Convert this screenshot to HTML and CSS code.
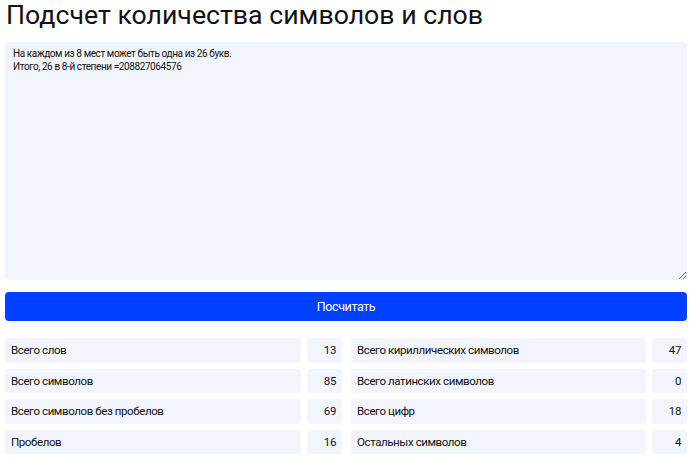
FILE: index.html
```html
<!DOCTYPE html>
<html lang="ru">
<head>
<meta charset="utf-8">
<title>Подсчет количества символов и слов</title>
<link rel="stylesheet" href="styles.css">
</head>
<body>
<div class="page">
  <h1 class="title">Подсчет количества символов и слов</h1>
  <textarea class="input">На каждом из 8 мест может быть одна из 26 букв.
Итого, 26 в 8-й степени =208827064576</textarea>
  <button class="btn">Посчитать</button>
  <div class="stats">
    <div class="col">
      <div class="row"><div class="label">Всего слов</div><div class="value">13</div></div>
      <div class="row"><div class="label">Всего символов</div><div class="value">85</div></div>
      <div class="row"><div class="label">Всего символов без пробелов</div><div class="value">69</div></div>
      <div class="row"><div class="label">Пробелов</div><div class="value">16</div></div>
    </div>
    <div class="col">
      <div class="row"><div class="label">Всего кириллических символов</div><div class="value">47</div></div>
      <div class="row"><div class="label">Всего латинских символов</div><div class="value">0</div></div>
      <div class="row"><div class="label">Всего цифр</div><div class="value">18</div></div>
      <div class="row"><div class="label">Остальных символов</div><div class="value">4</div></div>
    </div>
  </div>
</div>
</body>
</html>
```
FILE: styles.css
```css
* { box-sizing: border-box; }
html, body { margin: 0; padding: 0; background: #fff; }
body {
  font-family: Roboto, "Noto Sans", sans-serif;
  color: #111;
}
.page {
  width: 682px;
  margin-left: 5px;
  display: flex;
  flex-direction: column;
}
.title {
  margin: 0;
  padding-left: 1px;
  font-size: 26.7px;
  font-weight: 400;
  line-height: 30px;
  height: 42px;
  color: #111;
}
.input {
  display: block;
  width: 100%;
  height: 238px;
  border: none;
  border-radius: 4px;
  background: #f3f5fe;
  padding: 5px 8px;
  font-family: inherit;
  font-size: 10px;
  letter-spacing: -0.4px;
  line-height: 13px;
  color: #111;
  resize: vertical;
  outline: none;
}
.btn {
  margin-top: 12px;
  height: 29px;
  width: 100%;
  border: none;
  border-radius: 4px;
  background: #0040ff;
  color: #fff;
  font-family: inherit;
  font-size: 12.5px;
  letter-spacing: -0.4px;
  cursor: pointer;
}
.stats {
  margin-top: 17px;
  display: grid;
  grid-template-columns: 337px 336px;
  column-gap: 9px;
}
.col {
  display: flex;
  flex-direction: column;
  gap: 6px;
}
.row {
  display: flex;
  gap: 6px;
  height: 24.5px;
}
.label, .value {
  background: #f3f5fe;
  border-radius: 3px;
  font-size: 11.5px;
  letter-spacing: -0.4px;
  display: flex;
  align-items: center;
  padding: 0 6px;
}
.label { flex: 1; }
.value { width: 35px; justify-content: flex-end; }
```
